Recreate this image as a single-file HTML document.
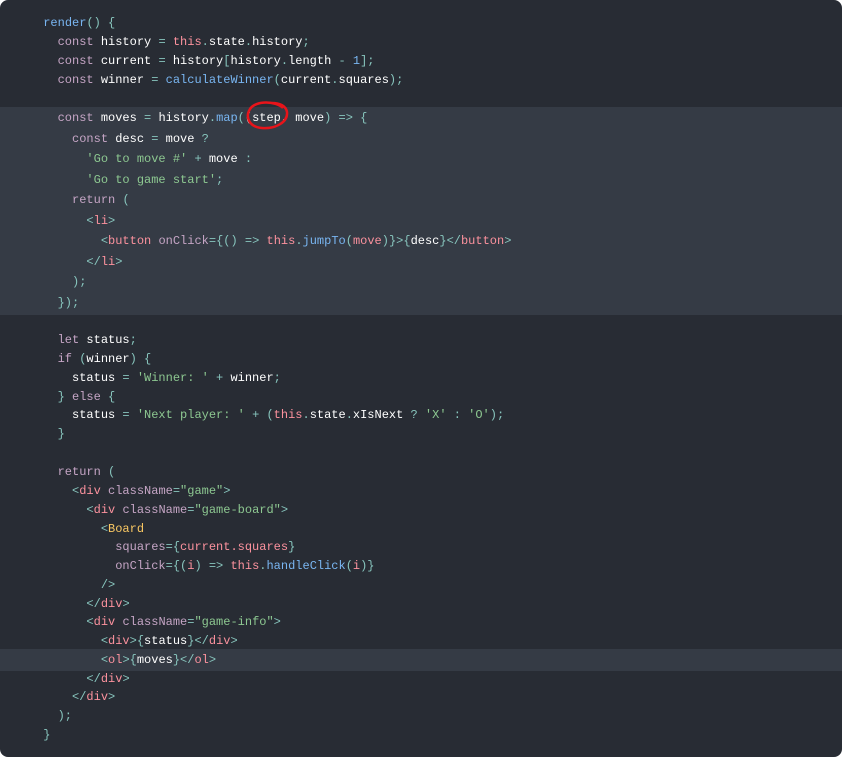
<!DOCTYPE html>
<html><head><meta charset="utf-8"><style>
html,body{margin:0;padding:0;background:#fff;width:842px;height:757px;overflow:hidden}
#p{position:absolute;left:0;top:0;width:842px;height:757px;background:#282c34;border-radius:8px;overflow:hidden}
.hl{position:absolute;left:0;width:842px;background:#353b45}
.l{position:absolute;left:0;white-space:pre;font-family:"Liberation Mono",monospace;font-size:12px;color:#ffffff;line-height:16px}
.k{color:#c5a5c5}.f{color:#79b6f2}.s{color:#8dc891}.p{color:#88c6be}.t{color:#fc929e}.n{color:#79b6f2}.c{color:#fac863}.a{color:#c5a5c5}.th{color:#fc929e}
</style></head><body><div id="p">
<div class="hl" style="top:107px;height:208px"></div>
<div class="hl" style="top:649px;height:22px"></div>
<div class="l" style="top:15px">      <span class="f">render</span><span class="p">() {</span></div>
<div class="l" style="top:34px">        <span class="k">const</span> history <span class="p">=</span> <span class="th">this</span><span class="p">.</span>state<span class="p">.</span>history<span class="p">;</span></div>
<div class="l" style="top:53px">        <span class="k">const</span> current <span class="p">=</span> history<span class="p">[</span>history<span class="p">.</span>length <span class="p">-</span> <span class="n">1</span><span class="p">];</span></div>
<div class="l" style="top:72px">        <span class="k">const</span> winner <span class="p">=</span> <span class="f">calculateWinner</span><span class="p">(</span>current<span class="p">.</span>squares<span class="p">);</span></div>
<div class="l" style="top:110px">        <span class="k">const</span> moves <span class="p">=</span> history<span class="p">.</span><span class="f">map</span><span class="p">(</span>(step, move<span class="p">) =&gt; {</span></div>
<div class="l" style="top:131px">          <span class="k">const</span> desc <span class="p">=</span> move <span class="p">?</span></div>
<div class="l" style="top:151px">            <span class="s">'Go to move #'</span> <span class="p">+</span> move <span class="p">:</span></div>
<div class="l" style="top:172px">            <span class="s">'Go to game start'</span><span class="p">;</span></div>
<div class="l" style="top:192px">          <span class="k">return</span> <span class="p">(</span></div>
<div class="l" style="top:213px">            <span class="p">&lt;</span><span class="t">li</span><span class="p">&gt;</span></div>
<div class="l" style="top:233px">              <span class="p">&lt;</span><span class="t">button</span> <span class="a">onClick</span><span class="p">={() =&gt;</span> <span class="th">this</span><span class="p">.</span><span class="f">jumpTo</span><span class="p">(</span><span class="t">move</span><span class="p">)}&gt;{</span>desc<span class="p">}&lt;/</span><span class="t">button</span><span class="p">&gt;</span></div>
<div class="l" style="top:254px">            <span class="p">&lt;/</span><span class="t">li</span><span class="p">&gt;</span></div>
<div class="l" style="top:274px">          <span class="p">);</span></div>
<div class="l" style="top:295px">        <span class="p">});</span></div>
<div class="l" style="top:332px">        <span class="k">let</span> status<span class="p">;</span></div>
<div class="l" style="top:351px">        <span class="k">if</span> <span class="p">(</span>winner<span class="p">) {</span></div>
<div class="l" style="top:370px">          status <span class="p">=</span> <span class="s">'Winner: '</span> <span class="p">+</span> winner<span class="p">;</span></div>
<div class="l" style="top:389px">        <span class="p">}</span> <span class="k">else</span> <span class="p">{</span></div>
<div class="l" style="top:407px">          status <span class="p">=</span> <span class="s">'Next player: '</span> <span class="p">+ (</span><span class="th">this</span><span class="p">.</span>state<span class="p">.</span>xIsNext <span class="p">?</span> <span class="s">'X'</span> <span class="p">:</span> <span class="s">'O'</span><span class="p">);</span></div>
<div class="l" style="top:426px">        <span class="p">}</span></div>
<div class="l" style="top:464px">        <span class="k">return</span> <span class="p">(</span></div>
<div class="l" style="top:483px">          <span class="p">&lt;</span><span class="t">div</span> <span class="a">className</span><span class="p">=</span><span class="s">"game"</span><span class="p">&gt;</span></div>
<div class="l" style="top:502px">            <span class="p">&lt;</span><span class="t">div</span> <span class="a">className</span><span class="p">=</span><span class="s">"game-board"</span><span class="p">&gt;</span></div>
<div class="l" style="top:521px">              <span class="p">&lt;</span><span class="c">Board</span></div>
<div class="l" style="top:539px">                <span class="a">squares</span><span class="p">={</span><span class="t">current.squares</span><span class="p">}</span></div>
<div class="l" style="top:558px">                <span class="a">onClick</span><span class="p">={(</span><span class="t">i</span><span class="p">) =&gt;</span> <span class="th">this</span><span class="p">.</span><span class="f">handleClick</span><span class="p">(</span><span class="t">i</span><span class="p">)}</span></div>
<div class="l" style="top:577px">              <span class="p">/&gt;</span></div>
<div class="l" style="top:596px">            <span class="p">&lt;/</span><span class="t">div</span><span class="p">&gt;</span></div>
<div class="l" style="top:614px">            <span class="p">&lt;</span><span class="t">div</span> <span class="a">className</span><span class="p">=</span><span class="s">"game-info"</span><span class="p">&gt;</span></div>
<div class="l" style="top:633px">              <span class="p">&lt;</span><span class="t">div</span><span class="p">&gt;{</span>status<span class="p">}&lt;/</span><span class="t">div</span><span class="p">&gt;</span></div>
<div class="l" style="top:652px">              <span class="p">&lt;</span><span class="t">ol</span><span class="p">&gt;{</span>moves<span class="p">}&lt;/</span><span class="t">ol</span><span class="p">&gt;</span></div>
<div class="l" style="top:671px">            <span class="p">&lt;/</span><span class="t">div</span><span class="p">&gt;</span></div>
<div class="l" style="top:689px">          <span class="p">&lt;/</span><span class="t">div</span><span class="p">&gt;</span></div>
<div class="l" style="top:708px">        <span class="p">);</span></div>
<div class="l" style="top:727px">      <span class="p">}</span></div>
<svg style="position:absolute;left:0;top:0" width="842" height="757"><path d="M283 108 C276 101 256 100 250 109 C245 117 249 127 262 128 C276 129 288 122 287 112 C286 106 280 103 272 103" fill="none" stroke="#e8141a" stroke-width="2.5"/></svg>
</div></body></html>
